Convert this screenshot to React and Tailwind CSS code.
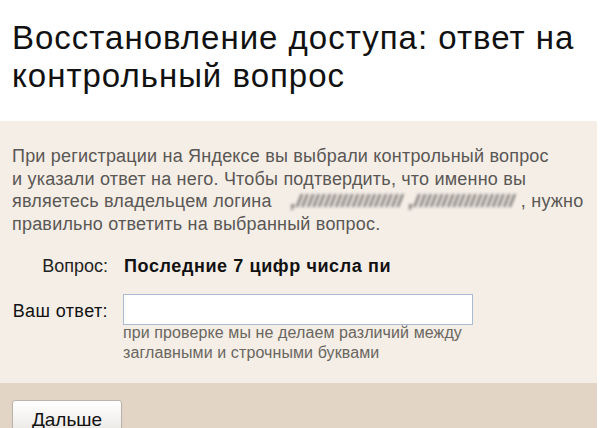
import React from "react";

const App = () => {
  return (
    <div className="w-[600px] h-[428px] overflow-hidden bg-white font-['Liberation_Sans',Arial,sans-serif]">
      {/* Заголовок */}
      <h1 className="px-3 pt-[19px] pb-[26px] text-[33px] leading-[38px] tracking-[1px] text-[#111]">
        Восстановление доступа: ответ на контрольный вопрос
      </h1>

      {/* Основной блок */}
      <div className="w-[597px] bg-[#f4eee7] px-3 pt-[24px] pb-[20px]">
        <p className="text-[18px] leading-[22.5px] tracking-[0.2px] text-[#5a5754]">
          При регистрации на Яндексе вы выбрали контрольный вопрос
          <br />
          и указали ответ на него. Чтобы подтвердить, что именно вы
          <br />
          являетесь владельцем логина{" "}
          <span className="inline-block w-[244px] whitespace-nowrap pl-[14px] align-bottom font-bold italic tracking-[0.6px] text-[#5f5b58] blur-[1.4px] select-none">
            ,/////////////////// ,//////////////////
          </span>
          , нужно
          <br />
          правильно ответить на выбранный вопрос.
        </p>

        <div className="mt-[18px] flex items-center">
          <div className="w-[96px] text-right text-[18px] text-[#222]">Вопрос:</div>
          <div className="ml-[16px] text-[18px] tracking-[0.6px] font-bold text-[#111]">Последние 7 цифр числа пи</div>
        </div>

        <div className="mt-[14px] flex items-start">
          <div className="w-[96px] pt-[4px] text-right text-[18px] tracking-[0.4px] text-[#111]">Ваш ответ:</div>
          <div className="ml-[15px]">
            <input
              type="text"
              className="block w-[350px] h-[31px] border border-[#a9bcd3] bg-white px-1 text-[17px] outline-none"
            />
            <div className="-mt-[2px] text-[16px] leading-[20px] tracking-[0.1px] text-[#6a6660]">
              при проверке мы не делаем различий между
              <br />
              заглавными и строчными буквами
            </div>
          </div>
        </div>
      </div>

      {/* Нижняя панель */}
      <div className="w-[597px] h-[60px] bg-[#e3d5c6] px-3 pt-[17px]">
        <button className="w-[110px] h-[40px] rounded-[3px] border border-[#b9b3ab] bg-gradient-to-b from-white to-[#e6e3df] text-[19px] text-[#111] shadow-[0_1px_1px_rgba(0,0,0,0.15)]">
          Дальше
        </button>
      </div>
    </div>
  );
};

export default App;
